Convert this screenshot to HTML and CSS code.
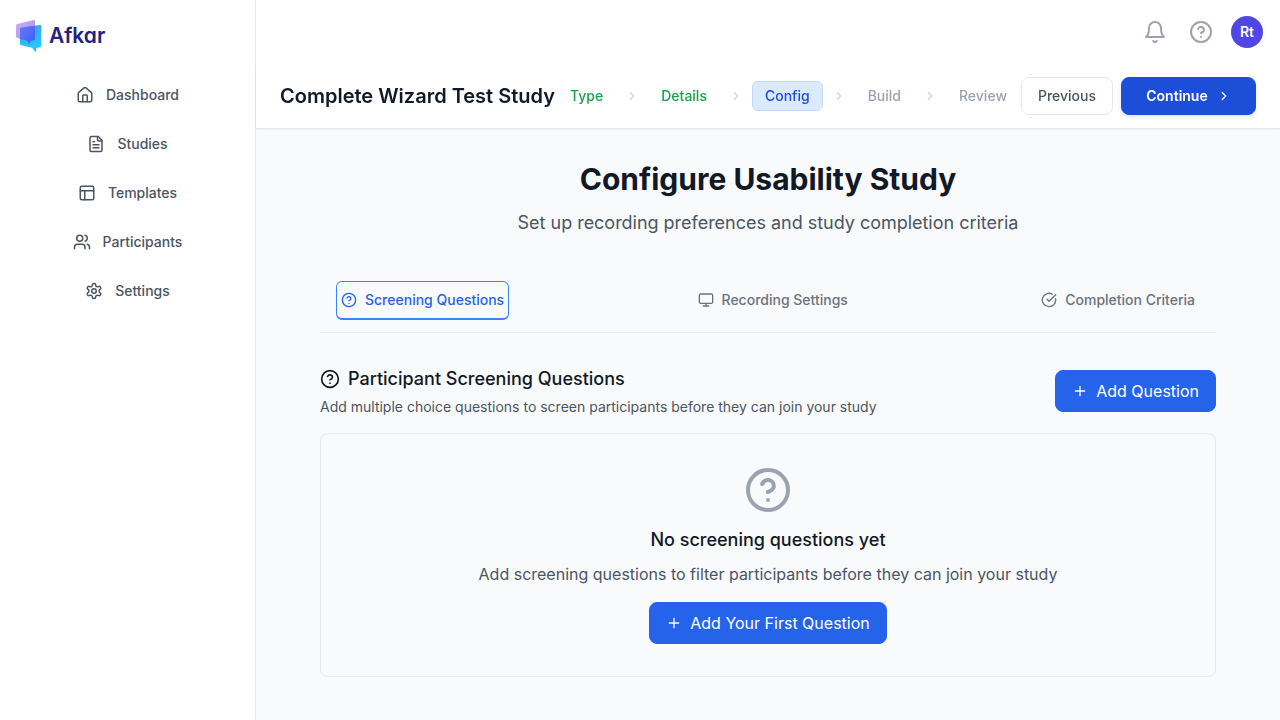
FILE: index.html
```html
<!DOCTYPE html>
<html lang="en">
<head>
<meta charset="utf-8">
<title>Afkar</title>
<link rel="stylesheet" href="styles.css">
</head>
<body>
<svg class="sprite" aria-hidden="true">
  <symbol id="help" viewBox="0 0 24 24"><circle cx="12" cy="12" r="10"/><path d="M9.09 9a3 3 0 0 1 5.83 1c0 2-3 3-3 3"/><path d="M12 17h.01"/></symbol>
  <symbol id="chevron" viewBox="0 0 24 24"><path d="m9 18 6-6-6-6"/></symbol>
  <symbol id="plus" viewBox="0 0 24 24"><path d="M5 12h14M12 5v14"/></symbol>
</svg>
<div class="app">
  <aside class="sidebar">
    <div class="brand">
      <svg class="brand-mark" viewBox="0 0 26 34">
        <defs>
          <linearGradient id="lilac" x1="0" y1="0" x2="1" y2="1"><stop offset="0" stop-color="#cbb2f6"/><stop offset="1" stop-color="#a58ae8"/></linearGradient>
          <linearGradient id="sky" x1="0" y1="0" x2="0.2" y2="1"><stop offset="0" stop-color="#3c9cfa"/><stop offset="1" stop-color="#22ccff"/></linearGradient>
          <linearGradient id="overlap" x1="0" y1="0" x2="1" y2="1"><stop offset="0" stop-color="#6a78f4"/><stop offset="1" stop-color="#3560fb"/></linearGradient>
        </defs>
        <path fill="url(#lilac)" d="M1.200 5 17.600 1.100Q19 .8 19 2.200V21L4 20 1 18.600Q0 18.400 0 17.300V6.500Q0 5.300 1.200 5Z"/>
        <path fill="url(#sky)" d="M5.200 8.700 23.800 6.100Q25.300 5.900 25.300 7.400V26.700Q25.300 27.900 24.100 28.200l-3.700.9-.4 3.200q-.3.900-1 .2l-3-3.700-10.800-2.500Q4 26 4 24.700V10Q4 8.900 5.200 8.700Z"/>
        <path fill="url(#overlap)" d="M5.200 8.700 19 6.800V19.800Q19 21 17.900 21.200l-3.500.8-.5 2.100q-.3.900-1 .1l-2.300-2.700L4 20V10Q4 8.900 5.200 8.700Z"/>
      </svg>
      <span class="brand-name">Afkar</span>
    </div>
    <nav class="side-nav">
      <a class="side-link"><svg class="icon" viewBox="0 0 24 24"><path d="M15 21v-8a1 1 0 0 0-1-1h-4a1 1 0 0 0-1 1v8"/><path d="M3 10a2 2 0 0 1 .709-1.528l7-5.999a2 2 0 0 1 2.582 0l7 5.999A2 2 0 0 1 21 10v9a2 2 0 0 1-2 2H5a2 2 0 0 1-2-2z"/></svg>Dashboard</a>
      <a class="side-link"><svg class="icon" viewBox="0 0 24 24"><path d="M15 2H6a2 2 0 0 0-2 2v16a2 2 0 0 0 2 2h12a2 2 0 0 0 2-2V7Z"/><path d="M14 2v4a2 2 0 0 0 2 2h4M10 9H8M16 13H8M16 17H8"/></svg>Studies</a>
      <a class="side-link"><svg class="icon" viewBox="0 0 24 24"><rect x="3" y="3" width="18" height="18" rx="2"/><path d="M3 9h18M9 21V9"/></svg>Templates</a>
      <a class="side-link"><svg class="icon" viewBox="0 0 24 24"><path d="M16 21v-2a4 4 0 0 0-4-4H6a4 4 0 0 0-4 4v2"/><circle cx="9" cy="7" r="4"/><path d="M22 21v-2a4 4 0 0 0-3-3.870M16 3.130a4 4 0 0 1 0 7.750"/></svg>Participants</a>
      <a class="side-link"><svg class="icon" viewBox="0 0 24 24"><path d="M12.220 2h-.44a2 2 0 0 0-2 2v.18a2 2 0 0 1-1 1.730l-.43.25a2 2 0 0 1-2 0l-.15-.08a2 2 0 0 0-2.730.73l-.22.38a2 2 0 0 0 .73 2.730l.15.1a2 2 0 0 1 1 1.720v.51a2 2 0 0 1-1 1.740l-.15.09a2 2 0 0 0-.73 2.730l.22.38a2 2 0 0 0 2.730.73l.15-.08a2 2 0 0 1 2 0l.43.25a2 2 0 0 1 1 1.730V20a2 2 0 0 0 2 2h.44a2 2 0 0 0 2-2v-.18a2 2 0 0 1 1-1.730l.43-.25a2 2 0 0 1 2 0l.15.08a2 2 0 0 0 2.730-.73l.22-.39a2 2 0 0 0-.73-2.730l-.15-.08a2 2 0 0 1-1-1.740v-.5a2 2 0 0 1 1-1.740l.15-.09a2 2 0 0 0 .73-2.730l-.22-.38a2 2 0 0 0-2.730-.73l-.15.08a2 2 0 0 1-2 0l-.43-.25a2 2 0 0 1-1-1.730V4a2 2 0 0 0-2-2z"/><circle cx="12" cy="12" r="3"/></svg>Settings</a>
    </nav>
  </aside>
  <div class="page">
    <header class="topbar">
      <svg class="icon" viewBox="0 0 24 24"><path d="M6 8a6 6 0 0 1 12 0c0 7 3 9 3 9H3s3-2 3-9"/><path d="M10.300 21a1.940 1.940 0 0 0 3.400 0"/></svg>
      <svg class="icon"><use href="#help"/></svg>
      <div class="avatar">Rt</div>
    </header>
    <div class="wizard-bar">
      <h2 class="study-title">Complete Wizard Test Study</h2>
      <div class="steps">
        <span class="step done">Type</span><svg class="icon"><use href="#chevron"/></svg>
        <span class="step done">Details</span><svg class="icon"><use href="#chevron"/></svg>
        <span class="step current">Config</span><svg class="icon"><use href="#chevron"/></svg>
        <span class="step">Build</span><svg class="icon"><use href="#chevron"/></svg>
        <span class="step">Review</span>
      </div>
      <div class="wizard-actions">
        <button class="btn-previous">Previous</button>
        <button class="btn-continue">Continue<svg class="icon"><use href="#chevron"/></svg></button>
      </div>
    </div>
    <main class="content">
      <div class="intro">
        <h1>Configure Usability Study</h1>
        <p>Set up recording preferences and study completion criteria</p>
      </div>
      <div class="tabs">
        <button class="tab active"><svg class="icon"><use href="#help"/></svg>Screening Questions</button>
        <button class="tab"><svg class="icon" viewBox="0 0 24 24"><rect x="2" y="3" width="20" height="14" rx="2"/><path d="M8 21h8M12 17v4"/></svg>Recording Settings</button>
        <button class="tab"><svg class="icon" viewBox="0 0 24 24"><path d="M21.801 10A10 10 0 1 1 17 3.335"/><path d="m9 11 3 3L22 4"/></svg>Completion Criteria</button>
      </div>
      <section class="screening">
        <div class="section-head">
          <div>
            <h3 class="section-title"><svg class="icon"><use href="#help"/></svg>Participant Screening Questions</h3>
            <p>Add multiple choice questions to screen participants before they can join your study</p>
          </div>
          <button class="btn-primary"><svg class="icon"><use href="#plus"/></svg>Add Question</button>
        </div>
        <div class="empty">
          <svg class="icon"><use href="#help"/></svg>
          <h3>No screening questions yet</h3>
          <p>Add screening questions to filter participants before they can join your study</p>
          <button class="btn-primary"><svg class="icon"><use href="#plus"/></svg>Add Your First Question</button>
        </div>
      </section>
    </main>
  </div>
</div>
</body>
</html>
```

FILE: styles.css
```css
* { box-sizing: border-box; margin: 0; padding: 0; }
body { font-family: Inter, "Liberation Sans", sans-serif; font-size: 16px; line-height: 24px; color: #111827; background: #f9fafb; }
button { font: inherit; white-space: nowrap; }
.sprite { display: none; }
.icon { flex: none; width: 16px; height: 16px; fill: none; stroke: currentColor; stroke-width: 2; stroke-linecap: round; stroke-linejoin: round; }

.app { display: flex; height: 720px; overflow: hidden; }
.sidebar { flex: none; width: 256px; background: #fff; border-right: 1px solid #e5e7eb; }
.brand { display: flex; align-items: center; gap: 7px; height: 72px; padding-left: 16px; }
.brand-mark { width: 26px; height: 34px; }
.brand-name { font-size: 21px; font-weight: 600; letter-spacing: 0; color: #25217f; font-feature-settings: "cv11"; }
.side-nav { display: flex; flex-direction: column; gap: 4px; }
.side-link { display: flex; align-items: center; justify-content: center; gap: 12px; height: 45px; font-size: 14px; font-weight: 500; color: #4b5563; }
.side-link .icon { width: 18px; height: 18px; }

.page { flex: 1; min-width: 0; display: flex; flex-direction: column; background: #f9fafb; }
.topbar { display: flex; align-items: center; justify-content: flex-end; gap: 22px; height: 64px; padding-right: 17px; background: #fff; color: #9ca3af; }
.topbar .icon { width: 24px; height: 24px; }
.avatar { display: flex; align-items: center; justify-content: center; width: 32px; height: 32px; margin-left: -4px; border-radius: 50%; background: #4f46e5; color: #fff; font-size: 14px; font-weight: 600; }
.wizard-bar { display: flex; align-items: center; height: 65px; padding: 0 24px; background: #fff; border-bottom: 1px solid #e5e7eb; box-shadow: 0 1px 2px rgba(0,0,0,.05); font-size: 14px; line-height: 20px; font-weight: 500; will-change: transform; }
.study-title { flex: 1; white-space: nowrap; font-size: 20px; line-height: 28px; font-weight: 600; }
.steps { display: flex; align-items: center; gap: 9px; color: #d1d5db; }
.wizard-bar .icon { width: 14px; height: 14px; stroke-width: 2.25; }
.step { padding: 4px 12px; border: 1px solid transparent; border-radius: 6px; color: #9ca3af; }
.step.done { color: #16a34a; }
.step.current { background: #dbeafe; border-color: #bfdbfe; color: #1d4ed8; }
.wizard-actions { display: flex; gap: 8px; margin-left: 1px; }
.wizard-actions button { display: flex; align-items: center; justify-content: center; gap: 9px; height: 38px; border-radius: 8px; }
.wizard-actions .btn-previous { width: 92px; border: 1px solid #e5e7eb; background: #fff; color: #4b5563; }
.wizard-actions .btn-continue { width: 135px; border: 1px solid #1d4ed8; background: #1d4ed8; color: #fff; font-weight: 600; box-shadow: 0 2px 4px rgba(0,0,0,.1); }

.content { width: 896px; margin: 0 auto; padding-top: 32px; }
.intro { text-align: center; }
.intro h1 { font-size: 30px; line-height: 36px; font-weight: 700; }
.intro p { margin-top: 12px; font-size: 18px; line-height: 28px; letter-spacing: -.02px; color: #4b5563; }
.tabs { display: flex; justify-content: space-between; margin-top: 44px; padding: 0 16px 12px; border-bottom: 1px solid #e5e7eb; }
.tab { display: flex; align-items: center; gap: 8px; height: 39px; padding: 0 4px; border: 1px solid transparent; border-bottom-width: 2px; border-radius: 6px; background: none; font-size: 14px; font-weight: 500; color: #6b7280; }
.tab.active { border-color: #3b82f6; color: #2563eb; }
.screening { margin-top: 32px; }
.section-head { display: flex; justify-content: space-between; align-items: center; }
.section-title { display: flex; align-items: center; gap: 8px; font-size: 18px; line-height: 28px; font-weight: 500; }
.section-title .icon { width: 20px; height: 20px; }
.section-head p { margin-top: 4px; font-size: 14px; line-height: 20px; color: #4b5563; }
.btn-primary { display: flex; align-items: center; gap: 8px; height: 42px; padding: 0 16px; border: 1px solid #2563eb; border-radius: 8px; background: #2563eb; color: #fff; }
.empty { display: flex; flex-direction: column; align-items: center; margin-top: 16px; padding: 32px; border: 1px solid #e5e7eb; border-radius: 8px; }
.empty > .icon { width: 48px; height: 48px; color: #9ca3af; }
.empty h3 { margin-top: 12px; font-size: 18px; line-height: 28px; font-weight: 500; }
.empty p { margin: 8px 0 16px; color: #4b5563; }
```
